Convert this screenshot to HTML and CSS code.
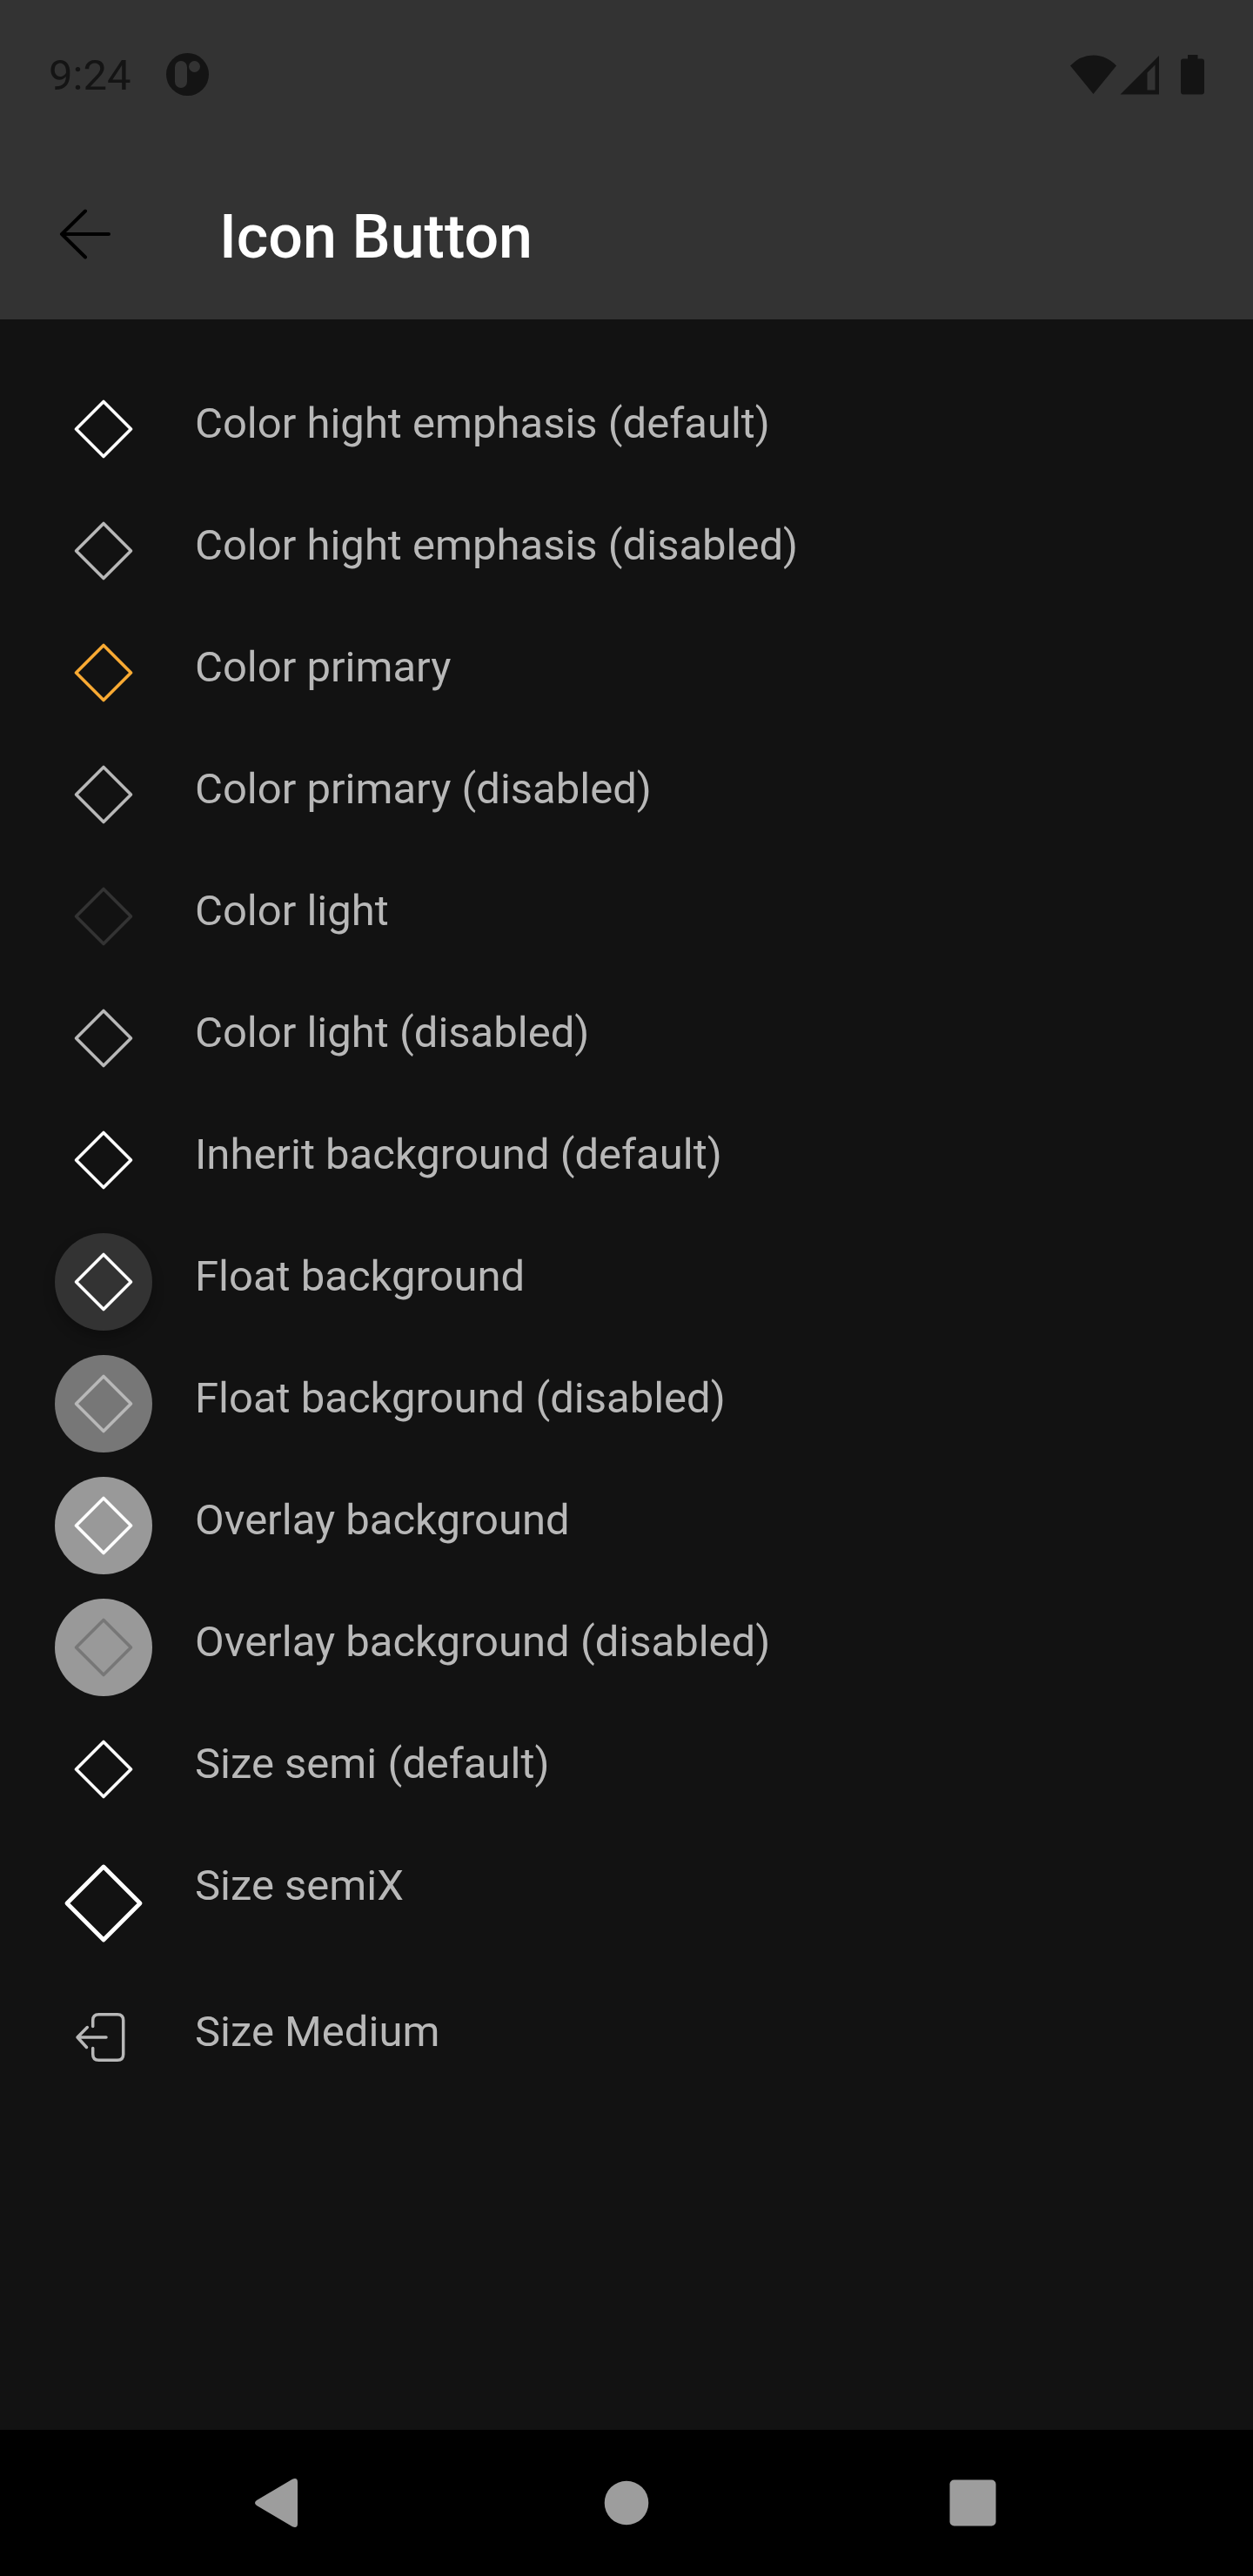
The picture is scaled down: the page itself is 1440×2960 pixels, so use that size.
FILE: index.html
```html
<!DOCTYPE html>
<html lang="en">
<head>
<meta charset="utf-8">
<title>Icon Button</title>
<link rel="stylesheet" href="styles.css">
</head>
<body>
<svg class="defs" aria-hidden="true">
  <symbol id="diamond" viewBox="0 0 84 84"><path d="M42 10.5 73.500 42 42 73.500 10.500 42Z" fill="none" stroke="currentColor" stroke-width="3.600" stroke-linejoin="round"/></symbol>
</svg>
<header class="header">
  <div class="status">
    <span class="time">9:24</span>
    <svg class="notice" viewBox="0 0 49 49"><circle cx="24.500" cy="24.500" r="24.500"/><rect class="cut" x="10" y="9" width="14" height="31" rx="7"/><circle class="cut" cx="32.500" cy="15.500" r="6.500"/></svg>
    <svg class="signals" viewBox="0 0 156 48"><path d="M0 13.500Q11.500 1.500 26.500 1.500T53 13.500L26.500 46ZM57.500 46.500 102 2V46.500ZM88.500 21.500V41.500H97.500V12.500ZM135 1H146.500V5.500H151Q154 5.500 154 8.500V43.500Q154 46.500 151 46.500H130Q127 46.500 127 43.500V8.500Q127 5.500 130 5.500H135Z" fill-rule="evenodd"/></svg>
  </div>
  <div class="toolbar">
    <svg class="back" viewBox="0 0 84 84"><path d="M42 15.500 15 42 42 68.500M15 42H69" /></svg>
    <h1 class="title">Icon Button</h1>
  </div>
</header>
<main class="list">
  <div class="row"><span class="button"><svg class="icon"><use href="#diamond"/></svg></span><span class="label">Color hight emphasis (default)</span></div>
  <div class="row"><span class="button disabled"><svg class="icon"><use href="#diamond"/></svg></span><span class="label">Color hight emphasis (disabled)</span></div>
  <div class="row"><span class="button primary"><svg class="icon"><use href="#diamond"/></svg></span><span class="label">Color primary</span></div>
  <div class="row"><span class="button disabled"><svg class="icon"><use href="#diamond"/></svg></span><span class="label">Color primary (disabled)</span></div>
  <div class="row"><span class="button light"><svg class="icon"><use href="#diamond"/></svg></span><span class="label">Color light</span></div>
  <div class="row"><span class="button disabled"><svg class="icon"><use href="#diamond"/></svg></span><span class="label">Color light (disabled)</span></div>
  <div class="row"><span class="button"><svg class="icon"><use href="#diamond"/></svg></span><span class="label">Inherit background (default)</span></div>
  <div class="row"><span class="button float"><svg class="icon"><use href="#diamond"/></svg></span><span class="label">Float background</span></div>
  <div class="row"><span class="button float-disabled"><svg class="icon"><use href="#diamond"/></svg></span><span class="label">Float background (disabled)</span></div>
  <div class="row"><span class="button overlay"><svg class="icon"><use href="#diamond"/></svg></span><span class="label">Overlay background</span></div>
  <div class="row"><span class="button overlay-disabled"><svg class="icon"><use href="#diamond"/></svg></span><span class="label">Overlay background (disabled)</span></div>
  <div class="row"><span class="button"><svg class="icon"><use href="#diamond"/></svg></span><span class="label">Size semi (default)</span></div>
  <div class="row"><span class="button large"><svg class="icon"><use href="#diamond"/></svg></span><span class="label">Size semiX</span></div>
  <div class="row"><span class="button disabled"><svg class="icon logout" viewBox="0 0 84 84"><path d="M29.700 29.500V22.500Q29.700 15.700 36.500 15.700H58Q64.700 15.700 64.700 22.500V61.500Q64.700 68.300 58 68.300H36.500Q29.700 68.300 29.700 61.500V54.500M23.300 30.500 12 42 22.500 53.500M12 42H45"/></svg></span><span class="label">Size Medium</span></div>
</main>
<nav class="navbar">
  <svg class="nav-icon" viewBox="0 0 60 60"><path d="M3 27 44 2.700Q50 0.500 50 6V54Q50 59.500 44 57.300L3 33Q-1 30 3 27Z"/></svg>
  <svg class="nav-icon" viewBox="0 0 60 60"><circle cx="30" cy="30" r="25.300"/></svg>
  <svg class="nav-icon" viewBox="0 0 60 60"><rect x="3.500" y="3.500" width="53" height="53" rx="5"/></svg>
</nav>
</body>
</html>
```
FILE: styles.css
```css
* { box-sizing: border-box; }
body {
  margin: 0;
  width: 1440px;
  height: 2960px;
  display: flex;
  flex-direction: column;
  background: #121212;
  font-family: Roboto, sans-serif;
}
svg { display: block; flex: none; }
.defs { position: absolute; width: 0; height: 0; }
.header { height: 367px; background: #333; }
.status {
  height: 171px;
  padding: 0 54px 0 56px;
  display: flex;
  align-items: center;
  color: #141414;
}
.time { font-size: 49px; line-height: 58px; padding-top: 3px; }
.notice { width: 49px; height: 49px; margin-left: 41px; fill: #141414; }
.notice .cut { fill: #333; }
.signals { width: 156px; height: 48px; margin-left: auto; fill: #141414; }
.toolbar {
  height: 196px;
  padding-left: 56px;
  display: flex;
  align-items: center;
  gap: 112px;
}
.back { width: 84px; height: 84px; fill: none; stroke: #000; stroke-width: 4; stroke-linecap: round; stroke-linejoin: round; }
.title { margin: 0; padding-top: 6px; font-size: 70px; line-height: 82px; font-weight: 500; color: #fff; }
.list {
  flex: 1;
  padding: 70px 63px 0;
  display: flex;
  flex-direction: column;
  gap: 28px;
}
.row { display: flex; align-items: flex-start; gap: 49px; }
.button {
  width: 112px;
  height: 112px;
  flex: none;
  border-radius: 50%;
  display: flex;
  align-items: center;
  justify-content: center;
  color: #fff;
}
.icon { width: 84px; height: 84px; }
.large { height: 140px; }
.large .icon { width: 112px; height: 112px; }
.disabled { color: #b8b8b8; }
.primary { color: #f9aa33; }
.light { color: #333; }
.float { background: #333; box-shadow: 0 7px 14px rgba(0, 0, 0, .28); }
.float-disabled { background: #777; color: #b8b8b8; }
.overlay { background: #999; }
.overlay-disabled { background: #999; color: #777; }
.logout { fill: none; stroke: currentColor; stroke-width: 3.5; stroke-linecap: round; stroke-linejoin: round; }
.label {
  padding-top: 21px;
  font-size: 49px;
  line-height: 58px;
  color: #b8b8b8;
}
.navbar {
  height: 168px;
  padding: 0 292px;
  display: flex;
  align-items: center;
  justify-content: space-between;
  background: #000;
  fill: #9d9d9d;
}
.nav-icon { width: 60px; height: 60px; }
```
